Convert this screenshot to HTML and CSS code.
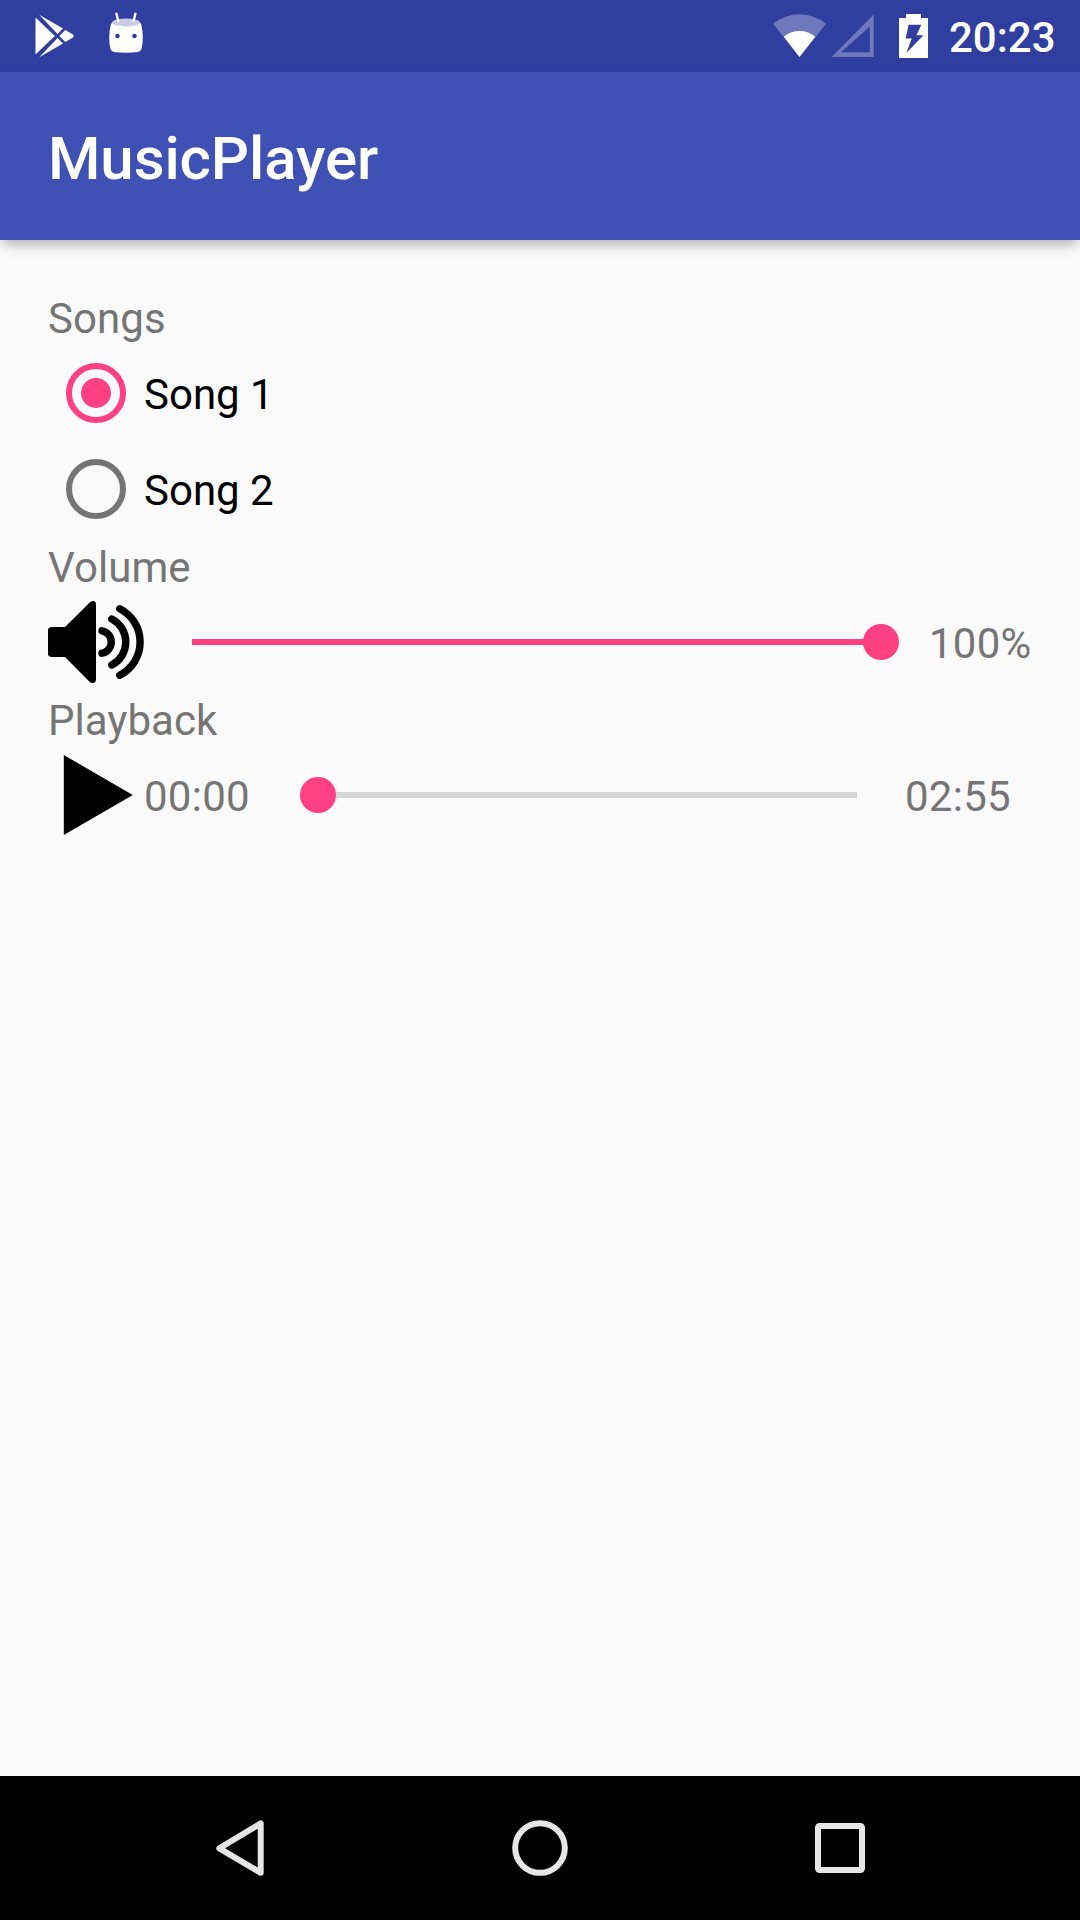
FILE: index.html
```html
<!DOCTYPE html>
<html lang="en">
<head>
    <meta charset="UTF-8">
    <meta name="viewport" content="width=device-width, initial-scale=1.0">
    <title>MusicPlayer</title>
    <link rel="stylesheet" href="styles.css">
</head>
<body>
    <div class="status-bar">
        <div class="notifications">
            <svg class="icon-store" width="40" height="44" viewBox="35 14 40 44" fill="#fff">
                <path d="M35.5 17.5L54.8 36L35.5 54.5z"/>
                <path d="M39.2 14.8L63 28.6L57.6 33.9z"/>
                <path d="M39.2 57.2L63 43.4L57.6 38.1z"/>
                <path d="M65.3 30L73 34.6Q74.6 36 73 37.4L65.3 42L59.4 36z"/>
            </svg>
            <svg class="icon-android" width="34" height="42" viewBox="109 12 34 42">
                <path d="M111 24Q112 22 114 22H138Q140 22 141.2 24Q142.8 31 142.8 37Q142.8 44 141.5 49Q141 51 138 52Q132 52.8 126 52.8Q120 52.8 114 52Q111 51 110.5 49Q109.2 44 109.2 37Q109.2 31 111 24z" fill="#fff"/>
                <ellipse cx="126" cy="22.5" rx="14" ry="3.9" fill="#c8cbe6"/>
                <path d="M116.4 13.8L118.3 21M135.4 13.8L133.6 21" stroke="#fff" stroke-width="2.4" stroke-linecap="round"/>
                <circle cx="117.5" cy="36" r="2.3" fill="#303f9f"/>
                <circle cx="134.5" cy="36" r="2.3" fill="#303f9f"/>
            </svg>
        </div>
        <div class="system">
            <svg width="53" height="44" viewBox="773 14 53 44">
                <path d="M799.5 57L773 23.8Q785 14.2 799.5 14.2T826 23.8z" fill="#fff" fill-opacity=".3"/>
                <path d="M799.5 57L783.8 36.8Q790.5 31 799.5 31T815.2 36.8z" fill="#fff"/>
            </svg>
            <svg class="icon-signal" width="43" height="44" viewBox="831 14 43 44">
                <path d="M831.5 57H873.8V14.5zM841 52.3L869.8 26.5V52.3z" fill="#fff" fill-opacity=".3" fill-rule="evenodd"/>
            </svg>
            <svg class="icon-battery" width="29" height="44" viewBox="899 14 29 44">
                <path d="M906 14H921V18H928V58H899V18H906zM908.6 24.7L905.6 38.4H911.8L906.3 53L923.5 35.3H916.4L921.4 24.7z" fill="#fff" fill-rule="evenodd"/>
            </svg>
            <span class="clock">20:23</span>
        </div>
    </div>

    <header class="app-bar">
        <h1>MusicPlayer</h1>
    </header>

    <main class="content">
        <h2 class="text">Songs</h2>
        <label class="song">
            <input type="radio" name="song" checked>
            <span class="text">Song 1</span>
        </label>
        <label class="song">
            <input type="radio" name="song">
            <span class="text">Song 2</span>
        </label>

        <h2 class="text">Volume</h2>
        <div class="control">
            <svg class="icon" viewBox="0 0 96 96">
                <path d="M0 35Q1 33 4 33H17L42 8.2Q48 5 48 11V85Q48 91 42 88.2L17 63H4Q1 63 0 61z"/>
                <path d="M54 36.8A11.4 11.4 0 0 1 54 59.2M63.8 25A25.9 25.9 0 0 1 63.8 71M71.8 14.8A37.3 37.3 0 0 1 71.8 81.2" fill="none" stroke="#000" stroke-width="7.4" stroke-linecap="round"/>
            </svg>
            <div class="seekbar">
                <div class="progress" style="width: 100%"></div>
                <div class="thumb" style="left: 100%"></div>
            </div>
            <span class="text percent">100%</span>
        </div>

        <h2 class="text">Playback</h2>
        <div class="control">
            <svg class="icon" viewBox="0 0 96 96">
                <path d="M15.8 8L84.8 48L15.8 88z"/>
            </svg>
            <span class="text time">00:00</span>
            <div class="seekbar">
                <div class="progress" style="width: 0%"></div>
                <div class="thumb" style="left: 0%"></div>
            </div>
            <span class="text time">02:55</span>
        </div>
    </main>

    <nav class="nav-bar">
        <div class="nav-item">
            <svg width="48" height="56" viewBox="216 1820 48 56">
                <path d="M219.3 1848.3L260.7 1823.4V1872.8z"/>
            </svg>
        </div>
        <div class="nav-item">
            <svg width="56" height="56" viewBox="0 0 56 56">
                <circle cx="28" cy="28" r="24.8"/>
            </svg>
        </div>
        <div class="nav-item">
            <svg width="50" height="50" viewBox="0 0 50 50">
                <rect x="3" y="3" width="44" height="44" rx="1.5"/>
            </svg>
        </div>
    </nav>
</body>
</html>
```
FILE: styles.css
```css
* {
    box-sizing: border-box;
}
body {
    font-family: Roboto, 'Liberation Sans', sans-serif;
    background-color: #fafafa;
    margin: 0;
    height: 1920px;
    display: flex;
    flex-direction: column;
    overflow: hidden;
}
svg {
    display: block;
    flex-shrink: 0;
}
.status-bar {
    height: 72px;
    background-color: #303f9f;
    display: flex;
    justify-content: space-between;
    padding: 0 25px 0 35px;
}
.notifications {
    display: flex;
    align-items: flex-start;
    gap: 34px;
    padding-top: 14px;
}
.icon-android {
    margin-top: -2px;
}
.system {
    display: flex;
    align-items: flex-start;
    padding-top: 14px;
}
.icon-signal {
    margin-left: 5px;
}
.icon-battery {
    margin-left: 25px;
}
.clock {
    color: white;
    font-size: 42px;
    font-weight: 500;
    line-height: 49px;
    margin: -1px 0 0 21px;
    width: 106px;
}
.app-bar {
    height: 168px;
    background-color: #3f51b5;
    box-shadow: 0 7px 12px -3px rgba(0, 0, 0, 0.31);
    display: flex;
    align-items: center;
    padding: 0 48px;
}
.app-bar h1 {
    color: white;
    font-size: 60px;
    font-weight: 500;
    line-height: 70px;
    letter-spacing: -0.1px;
    margin: 6px 0 0;
}
.content {
    flex: 1;
    padding: 48px;
}
.text {
    display: block;
    height: 57px;
    margin: 0;
    padding-top: 4px;
    font-size: 42px;
    font-weight: 400;
    line-height: 53px;
    letter-spacing: 0.08px;
    color: #757575;
    white-space: nowrap;
}
.song {
    height: 96px;
    display: flex;
    align-items: center;
    padding-left: 18px;
    gap: 18px;
}
.song .text,
.control .text {
    padding-top: 3px;
}
.song .text {
    color: black;
    letter-spacing: 0;
}
.song input {
    appearance: none;
    width: 60px;
    height: 60px;
    margin: 0;
    border: 6px solid #757575;
    border-radius: 50%;
    display: flex;
    align-items: center;
    justify-content: center;
}
.song input:checked {
    border-color: #ff4081;
}
.song input:checked::before {
    content: '';
    width: 30px;
    height: 30px;
    border-radius: 50%;
    background-color: #ff4081;
}
.control {
    height: 96px;
    display: flex;
    align-items: center;
}
.icon {
    width: 96px;
    height: 96px;
}
.seekbar {
    position: relative;
    flex: 1;
    height: 6px;
    margin: 0 48px;
    background-color: #d6d6d6;
}
.progress {
    height: 6px;
    background-color: #ff4081;
}
.thumb {
    position: absolute;
    top: -15px;
    width: 36px;
    height: 36px;
    margin-left: -18px;
    border-radius: 50%;
    background-color: #ff4081;
}
.control .percent,
.control .time {
    letter-spacing: 0.25px;
}
.percent {
    width: 103px;
}
.time {
    width: 127px;
}
.time:first-of-type {
    width: 126px;
}
.nav-bar {
    height: 144px;
    background-color: black;
    display: flex;
    justify-content: center;
}
.nav-item {
    width: 300px;
    display: flex;
    align-items: center;
    justify-content: center;
}
.nav-item svg {
    fill: none;
    stroke: #e6e6e6;
    stroke-width: 6;
    stroke-linejoin: round;
}
```
